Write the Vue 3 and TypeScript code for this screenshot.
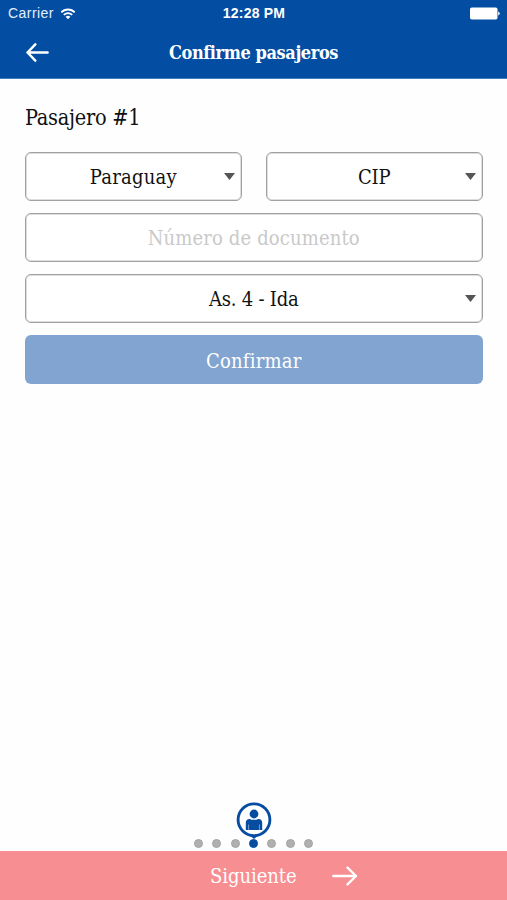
<script setup lang="ts">
import { ref } from 'vue'

const country = ref('Paraguay')
const documentType = ref('CIP')
const documentNumber = ref('')
const seat = ref('As. 4 - Ida')
const steps = 7
const currentStep = 4
</script>

<template>
  <main class="screen">
    <header class="header">
      <div class="status">
        <div class="carrier">
          <span>Carrier</span>
          <svg width="16" height="12" viewBox="0 0 16 12" fill="none" stroke="#fff">
            <path d="M1.3 4.4C5 .5 11 .5 14.7 4.4" stroke-width="1.8" />
            <path d="M3.8 6.9C6.2 4.5 9.8 4.5 12.2 6.9" stroke-width="1.7" />
            <path d="M8 11.2 5.6 8.8Q8 6.9 10.4 8.8Z" fill="#fff" stroke="none" />
          </svg>
        </div>
        <time>12:28 PM</time>
        <svg class="battery" width="30" height="13" viewBox="0 0 30 13" fill="#fff">
          <rect x="0" y=".5" width="27.5" height="12" rx="1.8" />
          <path d="M28.2 4.5q1.5.4 1.5 2t-1.5 2z" />
        </svg>
      </div>
      <div class="nav">
        <button class="back" aria-label="Volver">
          <svg width="24" height="20" viewBox="0 0 24 20" fill="none" stroke="#fff" stroke-width="2.5" stroke-linecap="round" stroke-linejoin="round">
            <path d="M21.6 9.5H1.5M9.3 1.4 1.5 9.5l7.8 8.1" />
          </svg>
        </button>
        <h1><span class="t-title">Confirme pasajeros</span></h1>
      </div>
    </header>

    <form class="form" @submit.prevent>
      <h2><span class="t-passenger">Pasajero #1</span></h2>
      <div class="row">
        <button type="button" class="field select">
          <span class="t-country">{{ country }}</span>
          <svg class="caret" width="11" height="7" viewBox="0 0 11 7"><path d="M0 0h11L5.5 7z" fill="#555" /></svg>
        </button>
        <button type="button" class="field select">
          <span class="t-cip">{{ documentType }}</span>
          <svg class="caret" width="11" height="7" viewBox="0 0 11 7"><path d="M0 0h11L5.5 7z" fill="#555" /></svg>
        </button>
      </div>
      <input v-model="documentNumber" class="field t-number" placeholder="Número de documento" />
      <button type="button" class="field select">
        <span class="t-seat">{{ seat }}</span>
        <svg class="caret" width="11" height="7" viewBox="0 0 11 7"><path d="M0 0h11L5.5 7z" fill="#555" /></svg>
      </button>
      <button class="confirm"><span class="t-confirm">Confirmar</span></button>
    </form>

    <div class="progress">
      <svg class="pin" width="36" height="37" viewBox="0 0 36 37">
        <path d="M12 32h12l-6 5z" fill="#064da1" />
        <circle cx="18" cy="17.8" r="15.9" fill="#fff" stroke="#064da1" stroke-width="2.9" />
        <circle cx="18" cy="12" r="4.4" fill="#064da1" />
        <path d="M9.8 28v-7.1q0-3.9 3.8-3.9 4.4 1.7 8.8 0 3.8 0 3.8 3.9V28z" fill="#064da1" />
        <path d="M12.6 22.5V28M23.4 22.5V28" stroke="#a9c1df" stroke-width=".7" />
      </svg>
      <div class="dots">
        <i v-for="step in steps" :key="step" :class="{ active: step === currentStep }"></i>
      </div>
    </div>

    <button class="next">
      <span class="t-next">Siguiente</span>
      <svg width="26" height="20" viewBox="0 0 26 20" fill="none" stroke="#fff" stroke-width="2.4" stroke-linecap="round" stroke-linejoin="round">
        <path d="M1.3 10H24M15.5 1.7 24 10l-8.5 8.3" />
      </svg>
    </button>
  </main>
</template>

<style>
body {
  background: #fff;
}
</style>

<style scoped>
* {
  box-sizing: border-box;
}
.screen {
  display: flex;
  flex-direction: column;
  width: 100%;
  height: 900px;
  overflow: hidden;
  background: #fefefe;
  color: #111;
  font-family: "DejaVu Serif Condensed", "DejaVu Serif", serif;
  font-stretch: condensed;
}
button, input {
  margin: 0;
  padding: 0;
  border: 0;
  background: none;
  color: inherit;
  font: inherit;
}
h1, h2 {
  margin: 0;
  font-weight: 400;
}
svg {
  display: block;
  flex-shrink: 0;
}
.header {
  height: 79px;
  background: #034ea2;
  border-bottom: 1px solid #3f7dbd;
  color: #fff;
  flex-shrink: 0;
}
.status {
  display: grid;
  grid-template-columns: 1fr auto 1fr;
  align-items: center;
  height: 27px;
  padding: 0 7px 0 8px;
  font: 14px/27px "Liberation Sans", Arial, sans-serif;
}
.carrier {
  display: flex;
  align-items: center;
  gap: 6px;
  letter-spacing: .45px;
  color: #e3efff;
}
.status time {
  font-weight: 700;
  font-size: 14px;
  letter-spacing: .2px;
}
.battery {
  justify-self: end;
}
.nav {
  display: grid;
  grid-template-columns: 50px 1fr 50px;
  align-items: center;
  height: 51px;
}
.back {
  padding-left: 26px;
}
.nav h1 {
  font-size: 18px;
  line-height: 51px;
  text-align: center;
}
.t-title {
  font-weight: 700;
  letter-spacing: -.4px;
}
.form {
  display: flex;
  flex-direction: column;
  gap: 12px;
  padding: 26px 24.5px 0 25px;
}
.form h2 {
  height: 25px;
  margin-bottom: 10px;
  font-size: 21.5px;
  line-height: 25px;
}
.row {
  display: grid;
  grid-template-columns: 1fr 1fr;
  gap: 24px;
}
.field {
  position: relative;
  width: 100%;
  height: 49px;
  border: 1px solid #a0a0a0;
  border-radius: 6px;
  background: #fff;
  box-shadow: inset 0 0 0 1px #dedede;
  font-size: 20px;
  line-height: 47px;
  text-align: center;
}
.select {
  padding-top: 2px;
  line-height: 45px;
}
.field::placeholder {
  color: #c9c9c9;
  opacity: 1;
}
.caret {
  position: absolute;
  right: 6px;
  top: 20px;
}
.confirm {
  height: 49px;
  padding-top: 3px;
  border-radius: 6px;
  background: #81a5d0;
  color: #fff;
  font-size: 20px;
  line-height: 46px;
}
.t-passenger { letter-spacing: -.25px; }
.t-country { letter-spacing: .25px; }
.t-cip { letter-spacing: -.2px; }
.t-number { letter-spacing: .14px; }
.t-seat { letter-spacing: -.2px; }
.t-confirm { letter-spacing: .2px; }
.t-next { letter-spacing: -.05px; }
.progress {
  display: flex;
  flex-direction: column;
  align-items: center;
  margin-top: auto;
  padding-bottom: 3px;
}
.dots {
  display: flex;
  gap: 9.3px;
}
.dots i {
  width: 9px;
  height: 9px;
  border: 1px solid #a2a2a2;
  border-radius: 50%;
  background: #b0b0b0;
}
.dots .active {
  border-color: #064da1;
  background: #064da1;
}
.next {
  display: flex;
  align-items: center;
  flex-shrink: 0;
  gap: 35px;
  height: 49px;
  padding-left: 210px;
  background: #f78e92;
  color: #fff;
  font-size: 20px;
}
</style>
